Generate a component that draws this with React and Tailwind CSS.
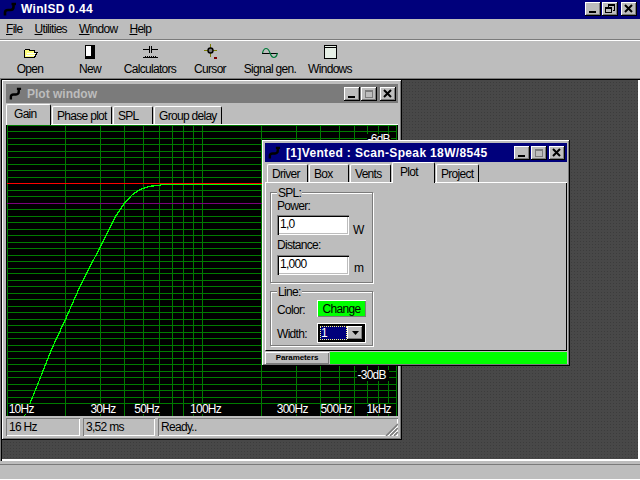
import React from 'react';

const raised = 'shadow-[inset_-1px_-1px_0_#000,inset_1px_1px_0_#fff,inset_-2px_-2px_0_#7b7b7b]';
const sunken = 'shadow-[inset_1px_1px_0_#7b7b7b,inset_-1px_-1px_0_#fff]';
const field = 'shadow-[inset_1px_1px_0_#7b7b7b,inset_2px_2px_0_#000,inset_-1px_-1px_0_#fff,inset_-2px_-2px_0_#bdbdbd]';

const vLines = [6, 65, 100, 124, 143, 159, 172, 183, 193, 202, 261, 296, 320, 339, 355, 368, 379, 389, 397];
const hLines = Array.from({ length: 44 }, (_, i) => Math.round(125 + i * 6.49));
const curve = '24,417 32,398 40,378 52,348 65,320 80,286 99,249 107,233 115,217 124,203.5 132,195 137,191.5 143,188.5 150,186.5 160,185.5 161,184.5';
const freqLabels = [
  ['10Hz', 8, 26],
  ['30Hz', 90, 26],
  ['50Hz', 134, 26],
  ['100Hz', 190, 32],
  ['300Hz', 277, 32],
  ['500Hz', 321, 32],
  ['1kHz', 367, 26],
];

function Logo({ className }) {
  return (
    <svg viewBox="0 0 14 14" className={className}>
      <path d="M2 13.5 V10.5 Q2 8 5 8 H7.5 Q10.5 8 10.5 5 V1.5 M8.5 2 H13" fill="none" stroke="#000" strokeWidth="2.6" />
    </svg>
  );
}

function CapButton({ kind, disabled }) {
  return (
    <div className={`w-4 h-[14px] bg-[#bdbdbd] flex items-center justify-center ${raised}`}>
      <svg width="12" height="10" viewBox="0 0 12 10" shapeRendering="crispEdges">
        {kind === 'min' && <rect x="2" y="7" width="7" height="2" fill="#000" />}
        {kind === 'max' && (
          <path d="M2.5 1.5 H9.5 V8.5 H2.5 Z M2 2.5 H10" fill="none" stroke={disabled ? '#7b7b7b' : '#000'} />
        )}
        {kind === 'restore' && (
          <path d="M4.5 2.5 V0.5 H10.5 V6.5 H8.5 M1.5 3.5 H7.5 V8.5 H1.5 Z M1.5 4 H7.5 M4.5 1 H10.5" fill="none" stroke="#000" />
        )}
        {kind === 'close' && <path d="M2 1 L9 8 M9 1 L2 8" fill="none" stroke="#000" strokeWidth="2" shapeRendering="auto" />}
      </svg>
    </div>
  );
}

function Tab({ label, width, active, inset }) {
  return (
    <div
      className={`flex items-center rounded-t-[2px] bg-[#bdbdbd] border-t border-l border-white border-r border-r-black ${
        active ? 'h-[21px] -mb-px pb-[2px] relative' : 'h-[18px] pt-px'
      } ${inset ? 'pl-[7px]' : 'pl-[4px]'}`}
      style={{ width }}
    >
      {label}
    </div>
  );
}

function ToolButton({ label, children }) {
  return (
    <div className="w-[60px] flex flex-col items-center">
      <div className="h-[18px] flex items-end">{children}</div>
      <div className="mt-[3px] leading-[15px]">{label}</div>
    </div>
  );
}

function Panel({ children, className }) {
  return <div className={`h-[18px] flex items-center px-[3px] ${sunken} ${className}`}>{children}</div>;
}

function Group({ label, className, children }) {
  return (
    <div className={`relative w-[103px] pl-[6px] border border-[#7b7b7b] shadow-[1px_1px_0_#fff,inset_1px_1px_0_#fff] ${className}`}>
      <div className="absolute left-[6px] -top-[6px] bg-[#bdbdbd] px-px leading-[12px]">{label}</div>
      {children}
    </div>
  );
}

function PlotChart() {
  return (
    <svg viewBox="6 125 392 292" className="w-[392px] h-[292px] bg-black block" shapeRendering="crispEdges">
      {vLines.map(x => (
        <rect key={x} x={x} y="125" width="1" height="292" fill="#007b00" />
      ))}
      {hLines.map(y => (
        <rect key={y} x="6" y={y} width="392" height="1" fill="#007b00" />
      ))}
      <rect x="6" y="183" width="392" height="1" fill="#ff0000" />
      <rect x="6" y="203" width="392" height="1" fill="#7b007b" />
      <polyline points={curve} fill="none" stroke="#00ff00" strokeWidth="1.3" />
      <rect x="161" y="184" width="237" height="1" fill="#00ff00" />
      {freqLabels.map(([t, x, w]) => (
        <g key={t}>
          <rect x={x} y="405" width={w} height="10" fill="#000" />
          <text x={x} y="414" fill="#fff" fontSize="12">{t}</text>
        </g>
      ))}
      <rect x="358" y="371" width="32" height="11" fill="#000" />
      <text x="358" y="380" fill="#fff" fontSize="12">-30dB</text>
      <rect x="368" y="134" width="24" height="11" fill="#000" />
      <text x="368" y="143" fill="#fff" fontSize="12">-6dB</text>
    </svg>
  );
}

export default function App() {
  return (
    <div className="w-[640px] h-[480px] relative overflow-hidden flex flex-col bg-[#bdbdbd] text-black text-[12px] tracking-[-0.7px] font-['Liberation_Sans',Arial,sans-serif]">
      <div className="h-[19px] shrink-0 bg-[#00007b] flex items-center pl-[3px] pr-[3px] pb-px">
        <Logo className="w-[14px] h-[14px]" />
        <div className="ml-[4px] text-white font-bold text-[12px] tracking-[0.3px]">WinISD 0.44</div>
        <div className="ml-auto flex">
          <CapButton kind="min" />
          <div className="ml-px"><CapButton kind="restore" /></div>
          <div className="ml-[3px]"><CapButton kind="close" /></div>
        </div>
      </div>

      <div className="h-[21px] shrink-0 flex items-center gap-[12px] pl-[6px] border-b border-[#7b7b7b]">
        <span><u>F</u>ile</span>
        <span><u>U</u>tilities</span>
        <span><u>W</u>indow</span>
        <span><u>H</u>elp</span>
      </div>

      <div className="h-[38px] shrink-0 flex border-t border-white">
        <ToolButton label="Open">
          <svg width="15" height="11" viewBox="0 0 15 11" shapeRendering="crispEdges">
            <path d="M1.5 9.5 V2.5 L3 1 H6 L7 2.5 H11.5 V4.5 H14 L11.5 9.5 Z" fill="#ffff7b" stroke="#000" />
            <path d="M4 5 H13 M3 7 H12" stroke="#fff" />
          </svg>
        </ToolButton>
        <ToolButton label="New">
          <svg width="10" height="14" viewBox="0 0 10 14" shapeRendering="crispEdges">
            <rect x="0.5" y="0.5" width="9" height="13" fill="#fff" stroke="#000" />
            <rect x="6" y="1" width="3" height="5" fill="#000" />
            <rect x="1" y="11" width="8" height="2" fill="#000" />
            <rect x="6" y="6" width="3" height="5" fill="#000" />
          </svg>
        </ToolButton>
        <ToolButton label="Calculators">
          <svg width="15" height="14" viewBox="0 0 15 14" shapeRendering="crispEdges">
            <path d="M0 4.5 H6 M9 4.5 H15 M6.5 1 V8 M8.5 1 V8 M0 12.5 H2 M13 12.5 H15" stroke="#000" fill="none" />
            <path d="M2 11.5 H3 M4 11.5 H5 M6 11.5 H7 M8 11.5 H9 M10 11.5 H11 M12 11.5 H13 M2 12.5 H13" stroke="#000" fill="none" />
          </svg>
        </ToolButton>
        <ToolButton label="Cursor">
          <svg width="15" height="15" viewBox="0 0 15 15">
            <path d="M7.5 0 V13 M1 6.5 H14" stroke="#7b7b00" fill="none" shapeRendering="crispEdges" />
            <circle cx="7.5" cy="6.5" r="2.5" fill="#7b7b7b" stroke="#000" strokeWidth="1.4" />
            <rect x="11" y="13" width="3" height="2" fill="#7b0000" />
          </svg>
        </ToolButton>
        <ToolButton label="Signal gen.">
          <svg width="16" height="12" viewBox="0 0 16 12">
            <path d="M0 6 H16" stroke="#000" strokeWidth="1" shapeRendering="crispEdges" />
            <path d="M0.5 6 C2 0 6 0 8 6 C10 12 14 12 15.5 6" fill="none" stroke="#007b3a" strokeWidth="1.2" />
          </svg>
        </ToolButton>
        <ToolButton label="Windows">
          <svg width="13" height="14" viewBox="0 0 13 14" shapeRendering="crispEdges">
            <rect x="0.5" y="0.5" width="12" height="13" fill="#e6efe6" stroke="#000" />
            <path d="M1 2.5 H12" stroke="#000" />
          </svg>
        </ToolButton>
      </div>

      <div className="relative flex-1 bg-[#484848] bg-[radial-gradient(#3c3c3c_0.7px,transparent_0.8px)] bg-[length:3px_3px] shadow-[inset_0_1px_0_#7b7b7b,inset_1px_0_0_#7b7b7b,inset_0_2px_0_#000,inset_2px_0_0_#000,inset_-2px_0_0_#fff,inset_0_-2px_0_#fff]">
        <div className={`absolute left-[2px] top-[2px] w-[400px] h-[360px] bg-[#bdbdbd] p-[4px] flex flex-col ${raised}`}>
          <div className="h-[19px] shrink-0 bg-[#7b7b7b] flex items-center pl-[3px] pr-[2px]">
            <Logo className="w-[13px] h-[13px]" />
            <div className="ml-[5px] font-bold text-[12px] text-[#bdbdbd] tracking-[0px]">Plot window</div>
            <div className="ml-auto flex">
              <CapButton kind="min" />
              <div className="ml-px"><CapButton kind="max" disabled /></div>
              <div className="ml-[3px]"><CapButton kind="close" /></div>
            </div>
          </div>
          <div className="h-[22px] shrink-0 flex items-end gap-px border-b border-white">
            <Tab label="Gain" width={45} active inset />
            <Tab label="Phase plot" width={60} />
            <Tab label="SPL" width={40} />
            <Tab label="Group delay" width={68} />
          </div>
          <PlotChart />
          <div className="mt-[2px] flex gap-[3px]">
            <Panel className="w-[74px]">16 Hz</Panel>
            <Panel className="w-[72px]">3,52 ms</Panel>
            <Panel className="flex-1 relative">
              Ready..
              <svg width="13" height="13" viewBox="0 0 13 13" className="absolute right-0 bottom-0">
                <path d="M1 13 L13 1 M5 13 L13 5 M9 13 L13 9" stroke="#7b7b7b" strokeWidth="1.5" />
                <path d="M3 13 L13 3 M7 13 L13 7 M11 13 L13 11" stroke="#fff" strokeWidth="1" />
              </svg>
            </Panel>
          </div>
        </div>

        <div className={`absolute left-[262px] top-[62px] w-[308px] h-[226px] bg-[#bdbdbd] p-[3px] flex flex-col ${raised}`}>
          <div className="h-[19px] shrink-0 bg-[#00007b] flex items-center pl-[3px] pr-[2px]">
            <Logo className="w-[13px] h-[13px]" />
            <div className="ml-[5px] font-bold text-[12px] text-white tracking-[0.35px]">[1]Vented : Scan-Speak 18W/8545</div>
            <div className="ml-auto flex">
              <CapButton kind="min" />
              <div className="ml-px"><CapButton kind="max" disabled /></div>
              <div className="ml-[2px]"><CapButton kind="close" /></div>
            </div>
          </div>
          <div className="h-[21px] shrink-0 flex items-end gap-px pl-[2px] border-b border-white">
            <Tab label="Driver" width={41} />
            <Tab label="Box" width={40} />
            <Tab label="Vents" width={41} />
            <Tab label="Plot" width={43} active inset />
            <Tab label="Project" width={43} />
          </div>
          <div className="h-[168px] shrink-0 pl-[4px] pt-[9px] flex flex-col gap-[8px] border-l border-white border-r border-b border-r-[#000] border-b-[#000]">
            <Group label="SPL:" className="h-[91px] pt-[6px]">
              <div className="leading-[12px] mt-px">Power:</div>
              <div className="flex items-end mt-[3px]">
                <div className={`w-[72px] h-[20px] bg-white pl-[3px] leading-[19px] ${field}`}>1,0</div>
                <span className="ml-[4px] -mb-px leading-[12px]">W</span>
              </div>
              <div className="leading-[12px] mt-[4px]">Distance:</div>
              <div className="flex items-end mt-[4px]">
                <div className={`w-[72px] h-[20px] bg-white pl-[3px] leading-[19px] ${field}`}>1,000</div>
                <span className="ml-[5px] mb-px leading-[12px]">m</span>
              </div>
            </Group>
            <Group label="Line:" className="h-[55px] pt-[6px]">
              <div className="flex items-center">
                <span className="w-[40px] pt-[3px]">Color:</span>
                <div className="w-[49px] h-[17px] bg-[#00ff00] flex items-center justify-center shadow-[inset_1px_1px_0_#fff,inset_-1px_-1px_0_#7b7b7b]">Change</div>
              </div>
              <div className="flex items-center mt-[3px]">
                <span className="w-[40px] pt-[3px]">Width:</span>
                <div className="w-[49px] h-[20px] bg-black p-[2px] flex border border-white">
                  <div className="w-[27px] bg-[#00007b] text-white leading-[14px] pl-[1px] outline-1 -outline-offset-1 outline-dotted outline-[#ffff7b]">1</div>
                  <div className={`flex-1 flex items-center justify-center bg-[#bdbdbd] ${raised}`}>
                    <svg width="7" height="4" viewBox="0 0 7 4"><path d="M0 0 H7 L3.5 4 Z" fill="#000" /></svg>
                  </div>
                </div>
              </div>
            </Group>
          </div>
          <div className="h-[12px] mt-px flex gap-px">
            <div className="w-[64px] flex items-center justify-center text-[8px] font-bold tracking-[-0.1px] shadow-[inset_1px_1px_0_#fff,inset_-1px_-1px_0_#7b7b7b]">Parameters</div>
            <div className="flex-1 bg-[#00ff00]" />
          </div>
        </div>
      </div>

      <div className="h-[3px] shrink-0" />
      <div className="h-[16px] shrink-0 border-t border-[#7b7b7b] border-b border-b-white" />
    </div>
  );
}
